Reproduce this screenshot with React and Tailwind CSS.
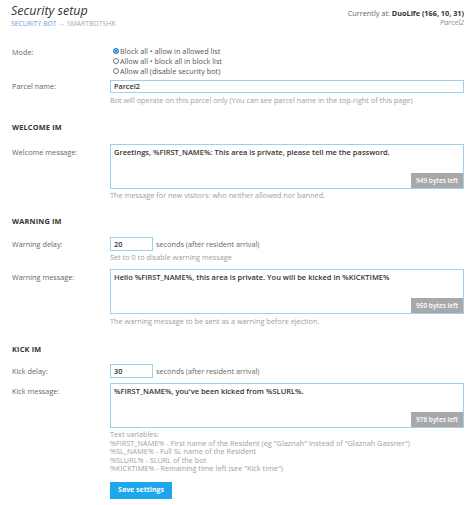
import React from 'react';

const Radio = ({ checked, children }) => (
  <div className="flex items-center gap-[1px] leading-[10px] text-[#555]">
    <span
      className={
        checked
          ? 'w-[6px] h-[6px] rounded-full bg-[#2b7fd8] border border-[#2b7fd8] shadow-[inset_0_0_0_1px_#9cc8f0]'
          : 'w-[6px] h-[6px] rounded-full bg-white border border-[#777]'
      }
    />
    <span>{children}</span>
  </div>
);

const Row = ({ label, labelPad = 'pt-0', center = false, className = '', children }) => (
  <div className={`flex ${center ? 'items-center' : 'items-start'} ${className}`}>
    <div className={`w-[98px] shrink-0 text-[#666] ${labelPad}`}>{label}</div>
    <div className="flex-1 min-w-0">{children}</div>
  </div>
);

const Help = ({ className = '', children }) => (
  <div className={`pl-[98px] leading-[9px] text-[#a0a0a0] ${className}`}>{children}</div>
);

const Heading = ({ className = '', children }) => (
  <div className={`leading-[10px] font-bold text-[#333] tracking-[0.2px] ${className}`}>{children}</div>
);

const MessageBox = ({ text, left }) => (
  <div className="relative h-[45px] border border-[#9fd2ea] bg-white">
    <div className="px-[3px] pt-[3px] leading-[9px] font-semibold text-[#333] text-[7.5px]">{text}</div>
    <div className="absolute right-0 bottom-0 h-[15px] w-[52px] bg-[#a8a8a8] text-white text-[6.5px] font-semibold flex items-center justify-center">
      {left} bytes left
    </div>
  </div>
);

const DelayInput = ({ value }) => (
  <div className="flex items-center">
    <div className="w-[43px] h-[14px] border border-[#9fd2ea] bg-white px-[3px] flex items-center font-semibold text-[#333]">
      {value}
    </div>
    <span className="ml-[3px] text-[#666]">seconds (after resident arrival)</span>
  </div>
);

export default function App() {
  return (
    <div
      className="w-[474px] h-[505px] bg-white overflow-hidden pl-[12px] pr-[10px] text-[7.3px]"
      style={{ fontFamily: '"Open Sans", "Noto Sans", sans-serif' }}
    >
      {/* header */}
      <div className="flex justify-between pt-[4px]">
        <div className="-ml-[1px]">
          <div className="text-[12.5px] leading-[14px] italic text-[#333]">Security setup</div>
          <div className="text-[6.8px] leading-[9px] mt-[1px]">
            <span className="text-[#6a9fd6]">SECURITY BOT</span>
            <span className="text-[#aaa]"> → SMARTBOTSHR</span>
          </div>
        </div>
        <div className="text-right pt-[5px]">
          <div className="leading-[9px] text-[#666]">
            Currently at: <span className="font-bold text-[#333]">DuoLife (166, 10, 31)</span>
          </div>
          <div className="leading-[9px] italic text-[#888]">Parcel2</div>
        </div>
      </div>

      {/* mode */}
      <Row label="Mode:" className="mt-[18px]" labelPad="pt-[1px]">
        <div className="pl-[3px]">
          <Radio checked>Block all • allow in allowed list</Radio>
          <Radio>Allow all • block all in block list</Radio>
          <Radio>Allow all (disable security bot)</Radio>
        </div>
      </Row>

      <Row label="Parcel name:" center className="mt-[4px]">
        <div className="h-[13px] border border-[#9fd2ea] bg-white px-[3px] flex items-center font-semibold text-[#333]">
          Parcel2
        </div>
      </Row>
      <Help className="mt-[3px]">
        Bot will operate on this parcel only (You can see parcel name in the top-right of this page)
      </Help>

      {/* welcome */}
      <Heading className="mt-[17px]">WELCOME IM</Heading>
      <Row label="Welcome message:" labelPad="pt-[3px]" className="mt-[12px]">
        <MessageBox
          text="Greetings, %FIRST_NAME%: This area is private, please tell me the password."
          left="949"
        />
      </Row>
      <Help className="mt-[2px]">The message for new visitors: who neither allowed nor banned.</Help>

      {/* warning */}
      <Heading className="mt-[16px]">WARNING IM</Heading>
      <Row label="Warning delay:" center className="mt-[11px]">
        <DelayInput value="20" />
      </Row>
      <Help className="mt-[2px]">Set to 0 to disable warning message</Help>
      <Row label="Warning message:" labelPad="pt-[3px]" className="mt-[7px]">
        <MessageBox
          text="Hello %FIRST_NAME%, this area is private. You will be kicked in %KICKTIME%"
          left="950"
        />
      </Row>
      <Help className="mt-[3px]">The warning message to be sent as a warning before ejection.</Help>

      {/* kick */}
      <Heading className="mt-[18px]">KICK IM</Heading>
      <Row label="Kick delay:" center className="mt-[10px]">
        <DelayInput value="30" />
      </Row>
      <Row label="Kick message:" labelPad="pt-[3px]" className="mt-[5px]">
        <MessageBox text="%FIRST_NAME%, you've been kicked from %SLURL%." left="978" />
      </Row>
      <Help className="mt-[2px] !leading-[8.6px]">
        <div>Text variables:</div>
        <div>%FIRST_NAME% - First name of the Resident (eg "Glaznah" instead of "Glaznah Gassner")</div>
        <div>%SL_NAME% - Full SL name of the Resident</div>
        <div>%SLURL% - SLURL of the bot</div>
        <div>%KICKTIME% - Remaining time left (see "Kick time")</div>
      </Help>
      <div className="pl-[98px] mt-[9px]">
        <button className="h-[17px] w-[62px] bg-[#1ea7ea] text-white font-bold text-[7px] flex items-center justify-center">
          Save settings
        </button>
      </div>
    </div>
  );
}
